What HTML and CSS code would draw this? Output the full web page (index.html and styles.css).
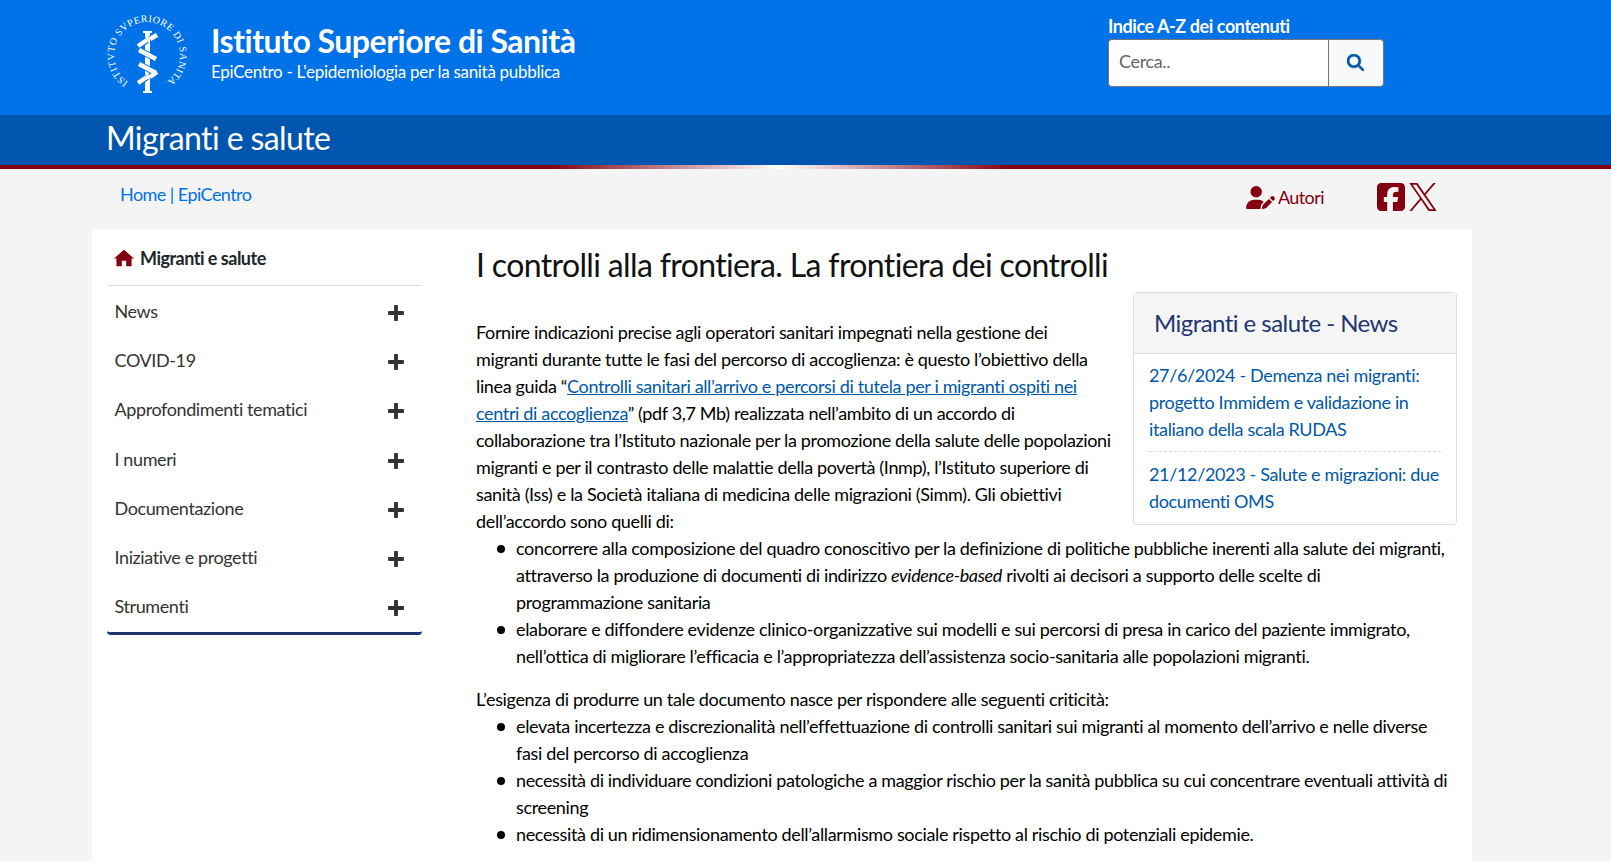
FILE: index.html
```html
<!DOCTYPE html>
<html lang="it">
<head>
<meta charset="utf-8">
<title>I controlli alla frontiera</title>
<link rel="stylesheet" href="styles.css">
</head>
<body>
<header class="top">
  <div class="brand">
    <svg class="logo" viewBox="0 0 84 80" width="84" height="80">
      <defs><path id="ring" d="M23.300 67.200 A33 33 0 1 1 60.700 67.200"/></defs>
      <text class="logo-text"><textPath href="#ring">ISTITVTO SVPERIORE DI SANITA</textPath></text>
      <path class="logo-rod" d="M38 16h9v2h-2V76h2v2h-9v-2h2V18h-2z"/>
      <path class="logo-case" d="M33 31l9-6M45 24l7-4M34 35l17 9M34 49l17 9M33 68l9-6M45 62l7-5"/>
      <path class="logo-snake" d="M33 31l9-6M45 24l7-4M34 35l17 9M34 49l17 9M33 68l9-6M45 62l7-5"/>
    </svg>
    <div class="brand-text">
      <div class="brand-title">Istituto Superiore di Sanità</div>
      <div class="brand-sub">EpiCentro - L'epidemiologia per la sanità pubblica</div>
    </div>
  </div>
  <form class="search">
    <label class="search-label" for="q">Indice A-Z dei contenuti</label>
    <div class="search-row">
      <input class="search-input" id="q" type="text" placeholder="Cerca..">
      <button class="search-btn" type="button" aria-label="Cerca">
        <svg viewBox="0 0 512 512" width="17" height="17"><path d="M416 208c0 45.900-14.900 88.300-40 122.700L502.600 457.400c12.500 12.500 12.500 32.800 0 45.300s-32.800 12.500-45.300 0L330.700 376c-34.400 25.200-76.800 40-122.700 40C93.100 416 0 322.900 0 208S93.100 0 208 0S416 93.100 416 208zM208 352a144 144 0 1 0 0-288 144 144 0 1 0 0 288z"/></svg>
      </button>
    </div>
  </form>
</header>
<div class="band"><span class="band-title">Migranti e salute</span></div>
<div class="rule"></div>
<div class="tools">
  <nav class="crumbs"><a href="#">Home</a> | <a href="#">EpiCentro</a></nav>
  <a class="authors" href="#">
    <svg viewBox="0 0 640 512" width="29" height="23"><path d="M224 256A128 128 0 1 0 224 0a128 128 0 1 0 0 256zm-45.700 48C79.800 304 0 383.800 0 482.300C0 498.700 13.300 512 29.700 512H322.800c-3.100-8.800-3.700-18.400-1.400-27.800l15-60.100c2.800-11.300 8.600-21.500 16.800-29.700l40.300-40.300c-32.100-31-75.700-50.100-123.900-50.100H178.300zm435.500-68.300c-15.600-15.600-40.900-15.600-56.600 0l-29.400 29.400 71 71 29.400-29.400c15.600-15.600 15.600-40.900 0-56.600l-14.400-14.400zM375.900 417c-4.100 4.100-7 9.200-8.400 14.900l-15 60.100c-1.400 5.500 .2 11.200 4.200 15.200s9.700 5.600 15.200 4.200l60.100-15c5.600-1.400 10.800-4.300 14.900-8.400L576.100 358.700l-71-71L375.900 417z"/></svg>
    <span>Autori</span>
  </a>
  <div class="social">
    <svg viewBox="0 32 448 448" width="28" height="28"><path d="M64 32C28.700 32 0 60.700 0 96V416c0 35.300 28.700 64 64 64h98.200V334.200H109.400V256h52.800V222.300c0-87.100 39.400-127.500 125-127.500c16.200 0 44.200 3.200 55.700 6.400V172c-6-.6-16.500-1-29.600-1c-42 0-58.200 15.900-58.200 57.200V256h83.600l-14.400 78.200H255V480H384c35.300 0 64-28.700 64-64V96c0-35.300-28.700-64-64-64H64z"/></svg>
    <svg viewBox="0 0 1200 1227" width="28" height="28"><path d="M714.163 519.284L1160.890 0H1055.030L667.137 450.887L357.328 0H0L468.492 681.821L0 1226.370H105.866L515.491 750.218L842.672 1226.370H1200L714.137 519.284H714.163ZM569.165 687.828L521.697 619.934L144.011 79.694H306.615L611.412 515.685L658.880 583.579L1055.080 1150.300H892.476L569.165 687.854V687.828Z"/></svg>
  </div>
</div>
<main class="card">
  <aside class="side">
    <div class="side-head">
      <svg viewBox="0 0 576 512" width="20" height="18"><path d="M288 16 L576 272 L506 272 L506 496 L352 496 L352 336 L224 336 L224 496 L70 496 L70 272 L0 272 Z"/></svg>
      <span>Migranti e salute</span>
    </div>
    <ul class="side-list">
      <li class="side-item"><span>News</span><svg class="plus" viewBox="16 48 416 416"><path d="M256 80c0-17.700-14.300-32-32-32s-32 14.300-32 32V224H48c-17.700 0-32 14.300-32 32s14.300 32 32 32H192V432c0 17.700 14.300 32 32 32s32-14.300 32-32V288H400c17.700 0 32-14.300 32-32s-14.300-32-32-32H256V80z"/></svg></li>
      <li class="side-item"><span>COVID-19</span><svg class="plus" viewBox="16 48 416 416"><path d="M256 80c0-17.700-14.300-32-32-32s-32 14.300-32 32V224H48c-17.700 0-32 14.300-32 32s14.300 32 32 32H192V432c0 17.700 14.300 32 32 32s32-14.300 32-32V288H400c17.700 0 32-14.300 32-32s-14.300-32-32-32H256V80z"/></svg></li>
      <li class="side-item"><span>Approfondimenti tematici</span><svg class="plus" viewBox="16 48 416 416"><path d="M256 80c0-17.700-14.300-32-32-32s-32 14.300-32 32V224H48c-17.700 0-32 14.300-32 32s14.300 32 32 32H192V432c0 17.700 14.300 32 32 32s32-14.300 32-32V288H400c17.700 0 32-14.300 32-32s-14.300-32-32-32H256V80z"/></svg></li>
      <li class="side-item"><span>I numeri</span><svg class="plus" viewBox="16 48 416 416"><path d="M256 80c0-17.700-14.300-32-32-32s-32 14.300-32 32V224H48c-17.700 0-32 14.300-32 32s14.300 32 32 32H192V432c0 17.700 14.300 32 32 32s32-14.300 32-32V288H400c17.700 0 32-14.300 32-32s-14.300-32-32-32H256V80z"/></svg></li>
      <li class="side-item"><span>Documentazione</span><svg class="plus" viewBox="16 48 416 416"><path d="M256 80c0-17.700-14.300-32-32-32s-32 14.300-32 32V224H48c-17.700 0-32 14.300-32 32s14.300 32 32 32H192V432c0 17.700 14.300 32 32 32s32-14.300 32-32V288H400c17.700 0 32-14.300 32-32s-14.300-32-32-32H256V80z"/></svg></li>
      <li class="side-item"><span>Iniziative e progetti</span><svg class="plus" viewBox="16 48 416 416"><path d="M256 80c0-17.700-14.300-32-32-32s-32 14.300-32 32V224H48c-17.700 0-32 14.300-32 32s14.300 32 32 32H192V432c0 17.700 14.300 32 32 32s32-14.300 32-32V288H400c17.700 0 32-14.300 32-32s-14.300-32-32-32H256V80z"/></svg></li>
      <li class="side-item"><span>Strumenti</span><svg class="plus" viewBox="16 48 416 416"><path d="M256 80c0-17.700-14.300-32-32-32s-32 14.300-32 32V224H48c-17.700 0-32 14.300-32 32s14.300 32 32 32H192V432c0 17.700 14.300 32 32 32s32-14.300 32-32V288H400c17.700 0 32-14.300 32-32s-14.300-32-32-32H256V80z"/></svg></li>
    </ul>
  </aside>
  <article class="article">
    <h1 class="title">I controlli alla frontiera. La frontiera dei controlli</h1>
    <section class="news">
      <h2 class="news-head">Migranti e salute - News</h2>
      <div class="news-body">
        <a class="news-item" href="#">27/6/2024 - Demenza nei migranti: progetto Immidem e validazione in italiano della scala RUDAS</a>
        <a class="news-item" href="#">21/12/2023 - Salute e migrazioni: due documenti OMS</a>
      </div>
    </section>
    <p class="para para-tight">Fornire indicazioni precise agli operatori sanitari impegnati nella gestione dei<br>migranti durante tutte le fasi del percorso di accoglienza: è questo l’obiettivo della<br>linea guida “<a href="#">Controlli sanitari all’arrivo e percorsi di tutela per i migranti ospiti nei<br>centri di accoglienza</a>” (pdf 3,7 Mb) realizzata nell’ambito di un accordo di<br>collaborazione tra l’Istituto nazionale per la promozione della salute delle popolazioni<br>migranti e per il contrasto delle malattie della povertà (Inmp), l’Istituto superiore di<br>sanità (Iss) e la Società italiana di medicina delle migrazioni (Simm). Gli obiettivi<br>dell’accordo sono quelli di:</p>
    <ul class="bullets">
      <li class="bullet">concorrere alla composizione del quadro conoscitivo per la definizione di politiche pubbliche inerenti alla salute dei migranti,<br>attraverso la produzione di documenti di indirizzo <em>evidence-based</em> rivolti ai decisori a supporto delle scelte di<br>programmazione sanitaria</li>
      <li class="bullet">elaborare e diffondere evidenze clinico-organizzative sui modelli e sui percorsi di presa in carico del paziente immigrato,<br>nell’ottica di migliorare l’efficacia e l’appropriatezza dell’assistenza socio-sanitaria alle popolazioni migranti.</li>
    </ul>
    <p class="para">L’esigenza di produrre un tale documento nasce per rispondere alle seguenti criticità:</p>
    <ul class="bullets">
      <li class="bullet">elevata incertezza e discrezionalità nell’effettuazione di controlli sanitari sui migranti al momento dell’arrivo e nelle diverse<br>fasi del percorso di accoglienza</li>
      <li class="bullet">necessità di individuare condizioni patologiche a maggior rischio per la sanità pubblica su cui concentrare eventuali attività di<br>screening</li>
      <li class="bullet">necessità di un ridimensionamento dell’allarmismo sociale rispetto al rischio di potenziali epidemie.</li>
    </ul>
  </article>
</main>
</body>
</html>
```
FILE: styles.css
```css
* { box-sizing: border-box; }
html, body { margin: 0; padding: 0; }
body {
  background: #f4f4f4;
  font-family: "Lato", "Liberation Sans", sans-serif;
  font-size: 18px;
  line-height: 27px;
  letter-spacing: -0.350px;
  color: #000;
  overflow: hidden;
  height: 861px;
}
a { color: inherit; text-decoration: none; }

.top {
  height: 115px;
  background: #0072e8;
  color: #fff;
  display: flex;
  justify-content: space-between;
  padding: 0 227px 0 105px;
}
.brand { display: flex; align-items: flex-start; }
.logo { margin-top: 15px; fill: #fff; }
.logo-text { font-family: "Liberation Serif", serif; font-size: 10px; letter-spacing: 0.450px; fill: #fff; }
.logo-rod { fill: #fff; }
.logo-case { fill: none; stroke: #0072e8; stroke-width: 6.500; }
.logo-snake { fill: none; stroke: #fff; stroke-width: 4.500; }
.brand-text { margin: 22px 0 0 22px; }
.brand-title { font-size: 32px; line-height: 38px; font-weight: 700; letter-spacing: -0.500px; }
.brand-sub { font-size: 17px; line-height: 24px; letter-spacing: -0.300px; }

.search { width: 276px; padding-top: 13px; }
.search-label { display: block; font-weight: 700; line-height: 26px; letter-spacing: -0.430px; }
.search-row { display: flex; height: 48px; }
.search-input {
  width: 220px;
  border: 1px solid #777;
  border-right: 0;
  border-radius: 4px 0 0 4px;
  padding: 0 10px 3px;
  font: inherit;
  letter-spacing: inherit;
  background: #fff;
}
.search-input::placeholder { color: #666; }
.search-btn {
  width: 56px;
  border: 1px solid #777;
  border-radius: 0 4px 4px 0;
  background: #f8f9fa;
  padding: 0 1px 2px 0;
  fill: #0058a8;
  stroke: #0058a8;
  stroke-width: 20;
  display: flex;
  align-items: center;
  justify-content: center;
}

.band {
  height: 50px;
  background: #0056ae;
  color: #fff;
  padding-left: 106px;
}
.band-title { font-size: 32px; line-height: 46px; font-weight: 400; letter-spacing: -0.600px; }
.rule {
  height: 4px;
  background: linear-gradient(to right, #85000f 550px, #fff 780px, #85000f 1010px);
}

.tools {
  height: 60px;
  display: flex;
  align-items: flex-start;
  padding-left: 120px;
  color: #85000f;
}
.crumbs { color: #0072e8; margin-top: 12px; width: 1126px; letter-spacing: -0.550px; }
.authors { display: flex; align-items: center; gap: 3px; width: 131px; margin-top: 15px; fill: #85000f; letter-spacing: -0.600px; }
.social { display: flex; gap: 4px; fill: #85000f; margin-top: 14px; }

.card {
  width: 1380px;
  margin-left: 92px;
  background: #fff;
  display: flex;
  padding: 0 15px;
  height: 640px;
}
.side { width: 315px; flex: none; }
.side-head {
  height: 57px;
  border-bottom: 1px solid #ddd;
  display: flex;
  align-items: center;
  gap: 6px;
  padding: 2px 0 0 7px;
  font-weight: 700;
  color: #212529;
  fill: #85000f;
  letter-spacing: -0.500px;
}
.side-list {
  list-style: none;
  margin: 0;
  padding: 0 0 1px;
  border-bottom: 3px solid #1f3670;
  border-radius: 0 0 4px 4px;
}
.side-item {
  height: 49.300px;
  padding: 1px 18px 0 7.500px;
  display: flex;
  justify-content: space-between;
  align-items: center;
  color: #333;
  letter-spacing: -0.390px;
}
.plus { width: 16px; height: 16px; fill: #333; stroke: #333; stroke-width: 36; margin-top: 3px; }

.article { margin-left: 54px; flex: 1; min-width: 0; }
.title { font-size: 32px; line-height: 38px; font-weight: 400; margin: 17px 0 0; color: #111; letter-spacing: -0.640px; }
.news {
  float: right;
  width: 324px;
  margin: 8px 0 8px 18px;
  border: 1px solid #ddd;
  border-radius: 4px;
}
.news-head {
  margin: 0;
  height: 61px;
  padding: 0 20px;
  background: #f5f5f5;
  border-bottom: 1px solid #ddd;
  font-size: 24px;
  font-weight: 400;
  line-height: 60px;
  color: #1f3670;
  letter-spacing: -0.550px;
}
.news-body { padding: 8px 15px 9px; }
.news-item { display: block; color: #0058a8; padding-bottom: 8px; }
.news-item + .news-item { border-top: 1px dashed #ddd; padding-top: 9px; padding-bottom: 0; }

.para { margin: 0; }
.para-tight { margin: 35px 0 0; }
.para a { color: #0058a8; text-decoration: underline; }
.bullets { margin: 0 0 16px; padding: 0 0 0 40px; list-style: none; }
.bullet { position: relative; }
.bullet::before {
  content: "";
  position: absolute;
  left: -19px;
  top: 10px;
  width: 8px;
  height: 8px;
  border-radius: 50%;
  background: #000;
}
```
